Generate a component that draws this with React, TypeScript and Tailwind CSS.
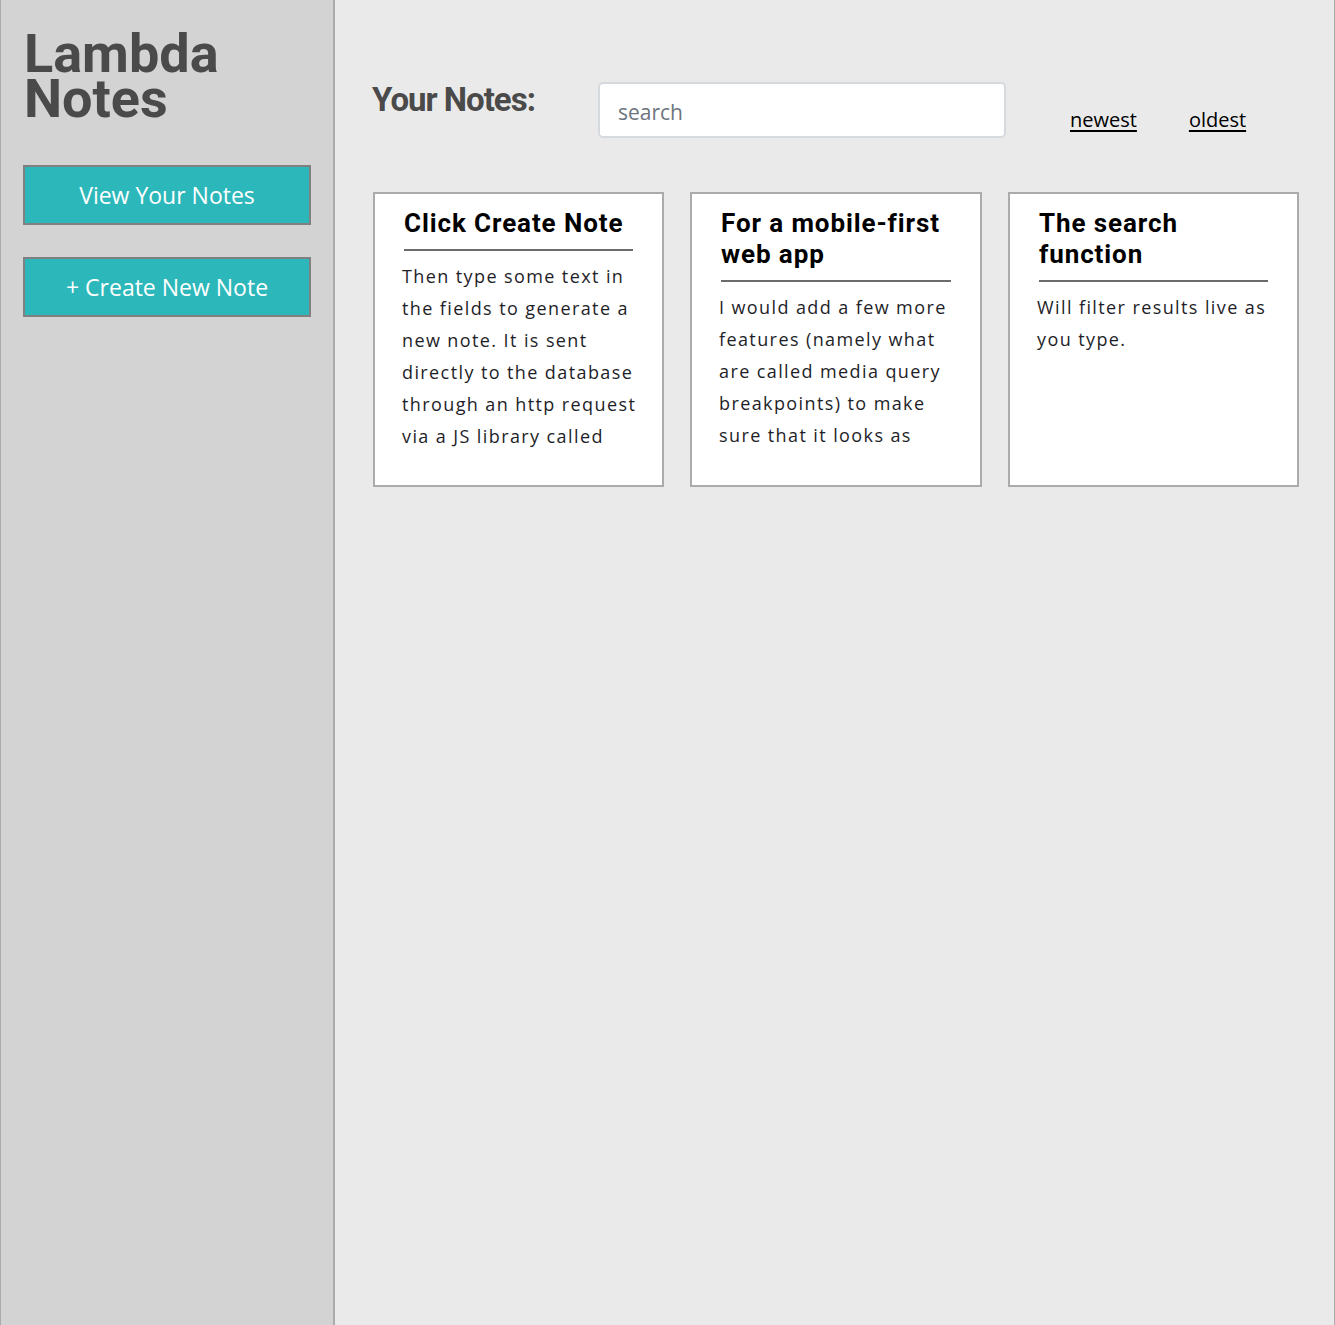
import { useState } from "react";

const notes = [
  {
    title: "Click Create Note",
    body: "Then type some text in the fields to generate a new note. It is sent directly to the database through an http request via a JS library called",
  },
  {
    title: "For a mobile-first web app",
    body: "I would add a few more features (namely what are called media query breakpoints) to make sure that it looks as",
  },
  {
    title: "The search function",
    body: "Will filter results live as you type.",
  },
];

const NoteCard = ({ title, body }: { title: string; body: string }) => (
  <div className="h-[295px] bg-white border-2 border-[#ababab] px-[29px] pt-[14px] overflow-hidden">
    <h3 className="font-['Roboto',sans-serif] font-bold text-[26px] leading-[31px] text-black tracking-[0.9px] pb-[10px] border-b-2 border-[#6b6b6b]">
      {title}
    </h3>
    <p className="mt-[9px] -ml-[2px] -mr-[4px] font-['Open_Sans',sans-serif] text-[18px] leading-[32px] text-[#1e1e28] tracking-[1.4px]">
      {body}
    </p>
  </div>
);

export default function App() {
  const [query, setQuery] = useState("");
  const shown = notes.filter(
    (n) =>
      n.title.toLowerCase().includes(query.toLowerCase()) ||
      n.body.toLowerCase().includes(query.toLowerCase())
  );

  return (
    <div className="flex min-h-[1325px] w-full border-x border-[#ababab]">
      {/* Sidebar */}
      <aside className="w-[334px] shrink-0 bg-[#d3d3d3] border-r-2 border-[#ababab] px-[22px] pt-[31px]">
        <h1 className="font-['Roboto',sans-serif] font-bold text-[54px] leading-[45px] text-[#4a4a4a] pl-[1px]">
          Lambda
          <br />
          Notes
        </h1>
        <div className="mt-[44px] flex flex-col gap-[32px] w-[288px]">
          <button className="h-[60px] bg-[#2cb8bb] border-2 border-[#808080] text-white font-['Open_Sans',sans-serif] text-[23px]">
            View Your Notes
          </button>
          <button className="h-[60px] bg-[#2cb8bb] border-2 border-[#808080] text-white font-['Open_Sans',sans-serif] text-[23px]">
            + Create New Note
          </button>
        </div>
      </aside>

      {/* Main */}
      <main className="flex-1 bg-[#eaeaea] pl-[38px] pr-[35px] pt-[82px]">
        <div className="flex items-start">
          <h2 className="w-[226px] shrink-0 font-['Roboto',sans-serif] font-bold text-[33px] leading-[36px] text-[#4a4a4a] tracking-[-1px] -ml-[1px]">
            Your Notes:
          </h2>
          <input
            value={query}
            onChange={(e) => setQuery(e.target.value)}
            placeholder="search"
            className="w-[408px] h-[56px] bg-white border-2 border-[#d6d9dd] rounded-[5px] px-[18px] pt-[4px] font-['Open_Sans',sans-serif] text-[21px] text-[#444] placeholder:text-[#6c757d] outline-none"
          />
          <div className="flex gap-[52px] ml-[64px] mt-[23px] font-['Open_Sans',sans-serif] text-[20px] text-black">
            <a href="#" className="underline underline-offset-[3px] decoration-2">
              newest
            </a>
            <a href="#" className="underline underline-offset-[3px] decoration-2">
              oldest
            </a>
          </div>
        </div>

        <div className="mt-[54px] grid grid-cols-[291px_292px_291px] gap-[26px]">
          {shown.map((n) => (
            <NoteCard key={n.title} title={n.title} body={n.body} />
          ))}
        </div>
      </main>
    </div>
  );
}
